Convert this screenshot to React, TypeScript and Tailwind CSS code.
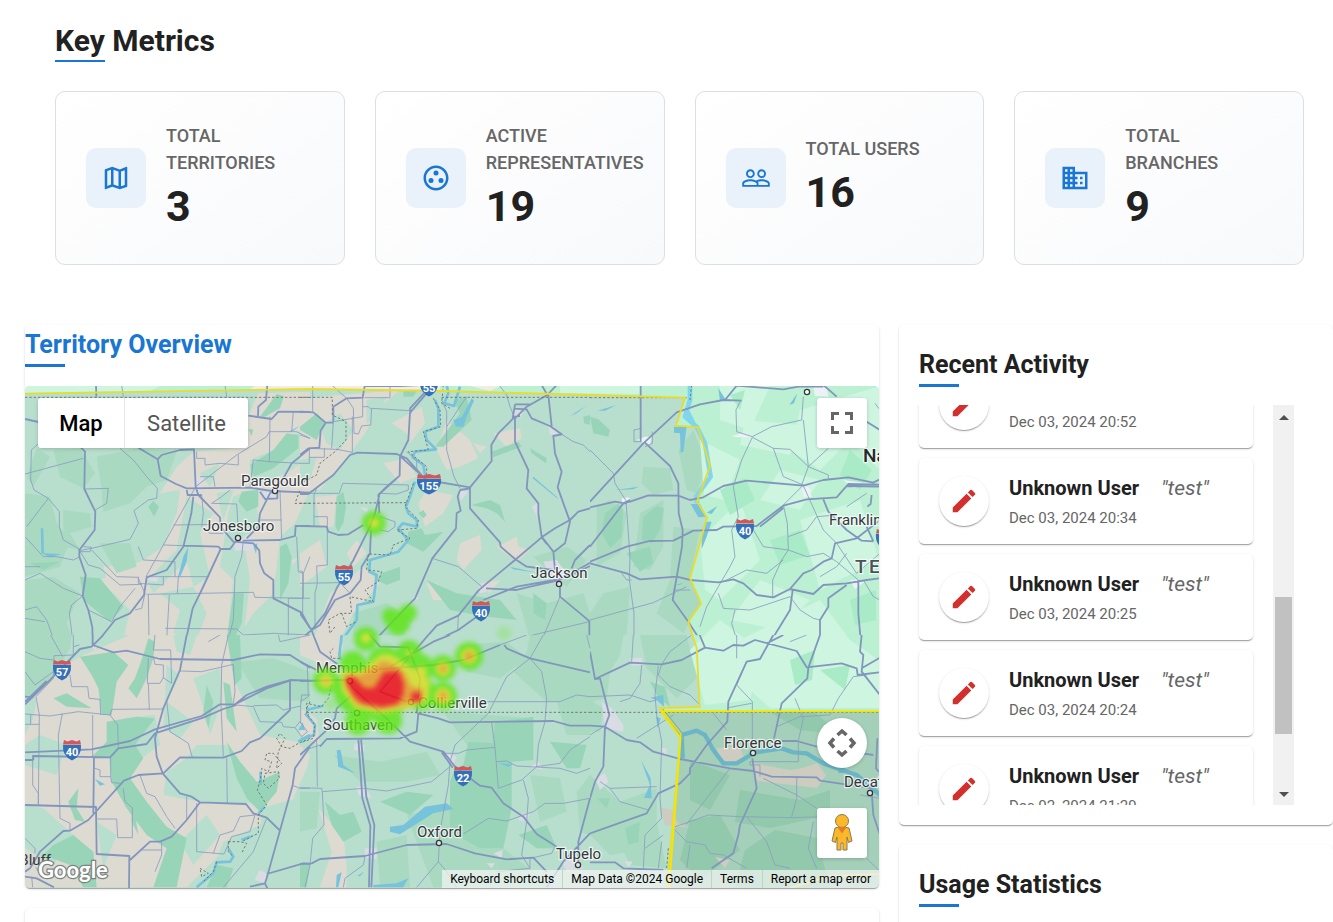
import { useLayoutEffect, useRef } from "react";
import type { ReactNode } from "react";
import { MdBusiness, MdEdit, MdOutlineGroupWork, MdOutlineMap, MdPeopleOutline } from "react-icons/md";

type Tile = {
  x: number;
  y: number;
  sand: string;
  pale: string;
  mid: string;
  deep: string;
  water: string;
  river: string;
  major: string;
  minor: string;
  dashed: string;
  town: string;
};

/* Map sheets: each is drawn on its own grid at three units to the pixel. */
const tiles: Tile[] = [
  {
    x: 20,
    y: 380,
    sand: "M690,95 L715,40 L870,35 L870,330 L820,440 L830,540 L760,640 L700,700 L650,780 L310,780 L330,690 L240,600 L370,540 L430,500 L470,400 L480,330 L420,340 L470,260 L520,215 L640,205Z M250,560 L310,555 L330,600 L260,600Z",
    pale: "M640,350 L700,325 L720,440 L670,470 L690,600 L670,780 L620,780 L640,600 L600,560 L625,400Z M780,470 L870,390 L870,520 L815,540 L840,640 L780,740 L700,780 L710,700 L760,640 L770,560Z M690,240 L760,210 L840,150 L870,130 L870,230 L800,280 L720,310 L690,300Z M590,340 L640,330 L610,420Z M540,280 L600,250 L570,320Z M420,640 L520,620 L560,700 L530,780 L460,760 L480,690Z M500,350 L580,400 L540,460 L570,590 L520,620 L500,540 L440,600 L400,640 L380,600 L470,510Z",
    mid: "M100,210 L180,205 L225,280 L190,325 L120,290Z M230,230 L350,205 L470,215 L440,300 L380,320 L330,370 L250,395 L245,330Z M15,340 L90,350 L110,430 L150,480 L120,560 L15,590Z M130,390 L210,400 L215,440 L150,460 L180,510 L130,500Z M15,600 L100,590 L180,640 L140,730 L160,780 L15,780Z M240,490 L330,490 L350,560 L290,580Z M50,205 L90,230 L40,320 L20,290Z",
    deep: "M180,590 L240,595 L310,680 L270,725 L190,660Z M690,255 L760,210 L800,160 L835,165 L835,205 L760,265 L700,290Z M665,335 L715,330 L715,380 L680,395 L655,365Z M385,380 L400,362 L417,380 L402,410Z M720,110 L770,42 L792,48 L780,85 L735,110Z M640,640 L672,640 L665,730 L640,780 L620,780Z M780,500 L800,490 L815,530 L805,610 L780,660Z M685,148 L700,148 L695,168Z M30,550 L120,545 L70,570Z",
    water: "M505,500 L500,545 L480,592 L474,590 L490,530Z M62,445 L70,445 L72,520 L125,522 L90,532 L64,520Z M805,155 L840,138 L820,152Z M700,498 L712,490 L708,522Z",
    river: "",
    major:
      "M180,200 L195,215 L193,327 L226,395 L224,450 L178,510 L178,530 L197,585 L188,648 L205,690 L217,742 L218,780 M355,203 L413,238 L422,288 L468,312 L500,325 L690,323 L755,333 L870,338 M413,238 L425,225 L480,210 L522,208 L527,320 M527,320 L535,345 L600,412 L602,440 L640,485 L700,490 L718,512 L720,550 L733,580 L760,600 L760,655 L845,698 L870,745 M520,350 L514,400 L490,500 L440,570 L380,592 L372,645 L330,700 L285,720 L237,780 M490,497 L595,500 L602,507 L545,630 L518,685 L498,780 M602,507 L630,507 L645,487 M500,330 L503,345 L545,345 M870,205 L815,250 L790,295 L750,340 L720,400 L715,440 L680,475 M670,482 L780,480 L825,468 L827,438 L870,438 M685,107 L755,117 L775,95 L870,96 M742,15 L738,60 L715,80 L714,108 M15,117 L55,126 M720,335 L735,357 L772,355 L772,338 M228,15 L229,50",
    minor:
      "M15,282 L190,235 M70,178 L34,210 L32,300 L42,330 L85,355 L118,395 L118,440 L130,480 L175,505 M195,327 L265,325 L260,370 L226,390 M300,205 L340,240 L380,290 L412,325 L410,355 L385,360 L342,392 L355,430 L330,478 L215,505 L178,512 M85,355 L20,440 M175,505 L205,555 L240,565 L300,615 L365,613 M215,510 L290,590 L355,592 M178,515 L210,515 L215,502 L190,500 M15,470 L70,530 L110,530 L160,540 L180,530 M15,600 L60,580 L130,625 L188,648 L155,675 L148,700 L158,780 M15,690 L50,680 L80,720 L102,780 M15,715 L75,725 M205,690 L275,725 L300,680 L345,625 M355,595 L375,640 L365,685 L345,690 M527,320 L430,495 L378,590 M527,320 L650,225 L740,170 L748,155 M460,435 L600,433 M430,495 L490,497 M380,643 L700,637 L705,652 L870,655 M385,645 L387,780 M448,645 L440,780 M435,745 L650,747 L670,765 L760,760 L870,765 M670,480 L665,530 L645,590 L640,720 L625,780 M780,330 L785,478 M750,110 L748,245 L700,240 L690,320 M748,155 L830,155 L870,175 M530,215 L530,235 L555,235 L555,255 L600,250 L655,255 L655,225 M748,245 L840,250 M545,345 L550,400 L545,440 L570,460 L610,460 M575,370 L605,350 L630,330 M575,370 L650,372 L655,455 M383,590 L430,590 L430,615 L355,610 L355,590 M430,590 L565,590 M465,545 L465,590 M370,540 L465,545 M355,500 L370,540 M805,655 L805,780 M805,655 L850,655 L850,580 L835,575 L830,470 M475,590 L472,640 M540,290 L580,290 L585,320 M820,95 L815,155 M15,560 L60,560 M720,420 L785,420 M870,530 L850,580 M305,15 L310,50 M615,15 L620,50",
    dashed: "M15,52 L870,52 M870,370 L825,370 L840,330",
    town: "M525,290 L550,290 L540,345 L515,320Z M640,480 L710,470 L700,510 L645,512Z M385,585 L418,590 L410,605 L385,602Z M730,335 L775,335 L770,355 L735,355Z",
  },
  {
    x: 300,
    y: 380,
    sand: "M0,60 L60,50 L300,30 L240,80 L195,160 L150,220 L60,330 L0,330Z M275,130 L365,80 L375,130 L330,190 L320,160Z M410,210 L440,120 L510,180 L535,235 L480,260 L440,270Z M355,370 L380,330 L460,345 L430,400 L375,440Z M480,490 L540,465 L545,510 L490,570 L470,540Z M590,500 L650,470 L655,500 L690,510 L650,545Z M580,160 L660,145 L665,175 L620,200Z M0,520 L60,480 L80,560 L0,620Z M140,520 L170,480 L200,520 L160,560Z M90,640 L190,560 L240,610 L160,700 L120,780 L40,780Z M380,610 L410,610 L465,660 L400,660Z M520,190 L560,200 L540,220Z M250,250 L320,235 L350,290 L300,310Z M45,350 L110,345 L100,440 L60,440Z M540,610 L600,600 L570,640Z",
    pale: "M60,140 L120,100 L160,150 L120,210 L80,190Z M200,60 L260,50 L230,120 L200,130Z M0,240 L50,230 L30,300 L0,290Z",
    mid: "M650,640 L740,670 L850,640 L870,700 L870,780 L690,780Z M160,700 L260,670 L340,720 L300,780 L160,780Z M700,530 L800,500 L860,540 L800,620Z",
    deep: "M0,140 L50,100 L75,125 L50,180 L0,150Z M110,350 L130,335 L138,380 L130,430 L115,455 L106,440Z M325,455 L365,445 L375,465 L430,455 L370,515 L320,490Z M245,580 L300,560 L300,600 L260,615 L230,600Z M575,215 L655,185 L665,200 L580,232Z M690,205 L740,235 L738,250 L695,220Z M515,375 L570,360 L600,375 L615,425 L590,400 L560,385Z M380,600 L470,640 L600,660 L650,720 L560,710 L450,690Z M405,200 L480,100 L460,60 L500,50 L515,120 L430,200Z M310,20 L360,15 L340,50 L310,50Z M355,400 L370,390 L380,405 L370,415Z M850,110 L870,105 L870,135 L852,130Z M700,640 L740,670 L735,720 L700,700Z",
    water: "M515,55 L522,62 L500,110 L490,140 L468,140 L460,120 L485,112Z M810,108 L858,78 L830,100Z M700,290 L770,350 L775,358 L698,295Z M630,560 L710,578 L640,568Z",
    river:
      "M440,15 L445,40 L433,70 L462,78 L480,20 M405,60 L415,85 L415,140 L375,155 L380,180 L408,208 L345,215 L338,232 L370,255 L375,285 M345,305 L330,350 L318,380 L325,400 L350,420 L352,440 L308,430 L295,445 L325,480 L295,515 L210,540 L208,575 L230,585 L220,665 L172,675 L170,720 L130,775",
    major:
      "M0,95 L40,97 L77,128 L100,128 M77,128 L62,152 L58,203 L25,205 L0,225 M100,125 L100,80 L140,55 L188,53 L194,18 L300,18 L365,15 M380,40 L330,98 L325,180 L300,230 L299,287 L235,345 L238,400 M372,40 L330,85 L332,100 M0,342 L25,342 L100,285 L150,225 L172,218 L290,222 L320,235 L365,285 M302,230 L380,300 L510,322 L575,243 L574,195 L595,160 L645,110 L660,108 M510,322 L510,385 L600,487 L602,500 L645,537 L680,560 L760,570 M725,15 L742,45 L680,80 L645,115 L645,185 L685,270 L680,325 L715,370 L715,400 L725,470 L760,515 L765,570 M770,15 L742,45 M645,73 L695,73 M645,86 L680,88 L695,115 L750,138 L785,163 L760,168 L765,220 L785,275 L773,322 L810,425 L795,490 L762,515 M645,73 L638,115 M745,45 L755,138 M725,472 L740,492 M870,385 L835,395 L810,420 L765,445 L725,472 L645,540 L560,610 L535,632 L475,707 L410,737 L372,780 M870,548 L780,600 L690,620 L650,630 L558,625 M870,558 L790,595 L650,620 L550,660 M545,700 L475,750 L410,780 M870,495 L825,540 L815,565 M480,330 L473,350 L482,392 L470,400 L468,445 L397,535 L345,655 L230,775 M510,325 L480,330 M238,345 L225,400 L210,440 L160,540 L110,625 L75,700 L35,750 L0,780 M213,450 L210,520 L185,560 L182,600 L150,640 L105,660 L60,735 L35,750 L0,700 M0,438 L80,440 L85,455 L115,465 L145,463 L190,435 M35,750 L45,780 M780,620 L780,650 L870,725 M868,725 V780 M235,345 L260,320 L299,287",
    minor:
      "M38,15 L38,95 M95,15 L140,55 L160,85 L162,160 L175,162 L185,138 L212,135 L215,85 L330,92 M188,53 L188,110 L100,125 L95,205 M194,53 L270,53 L270,18 M28,205 L28,250 L0,250 M28,232 L73,232 L73,205 M28,205 L110,208 L157,217 L157,110 M500,50 L440,140 L440,210 L462,290 L480,325 M425,60 L440,95 L440,140 M597,15 L620,45 L630,80 L642,108 M785,163 L820,185 L850,195 L870,215 M0,340 L118,340 L128,310 L325,315 L325,330 L290,342 L240,340 M397,535 L475,560 L545,620 M475,707 L473,750 M780,650 L730,770 M868,725 L700,765 L660,780 M42,345 L42,438 M82,440 L82,555 L50,558 L52,610 L45,640 L45,740 M0,572 L8,575 L8,700 M0,610 L120,608 L150,640 M240,410 L285,425 L285,440 L265,455 L240,450 M320,215 L350,240 L350,275 M0,165 L30,175 M42,410 L82,410 L82,440 M215,90 L205,80 L188,80 M50,325 L42,345",
    dashed:
      "M0,52 L97,52 L97,105 L138,125 L138,180 L105,215 L60,250 L50,285 L0,310 M0,370 L325,368 M425,52 L870,52 M430,15 L425,70 L450,85 M400,55 L420,90 L422,140 L370,155 L385,210 L325,215 L380,260 L380,285 M340,310 L315,380 L355,420 L350,445 L290,450 L330,475 L280,495 L270,525 L205,522 L200,570 L245,575 L235,605 L195,630 L220,665 L150,650 L155,700 L120,700 L85,720 L90,760 L105,740 M125,700 L140,740 L170,725",
    town: "M730,545 L770,540 L800,580 L775,625 L755,600Z M645,85 L670,95 L660,115 L640,110Z M745,130 L775,160 L750,165Z M475,330 L505,335 L482,362Z M715,368 L712,410 L695,380Z M535,620 L560,610 L560,635 L540,640Z M348,640 L355,658 L335,660Z M180,380 L205,385 L200,400Z",
  },
  {
    x: 590,
    y: 380,
    sand: "",
    pale: "M20,80 L90,70 L140,110 L120,180 L40,160Z M190,350 L260,350 L255,430 L210,440Z",
    mid: "M160,260 L240,265 L250,330 L190,345 L155,310Z M250,440 L330,450 L300,590 L330,670 L280,760 L200,700 L240,600Z M20,380 L60,360 L110,400 L90,520 L20,560Z M150,400 L220,360 L220,500 L180,570 L130,560Z M265,210 L310,150 L350,250 L320,340 L290,330Z M40,640 L120,620 L110,760 L100,780 L0,780 L0,700Z",
    deep: "M0,110 L25,118 L60,150 L55,170 L10,160Z M45,400 L85,370 L100,390 L95,470 L60,505 L35,460Z M160,410 L200,378 L222,385 L210,450 L185,490 L155,480Z M110,520 L180,500 L190,550 L150,575Z",
    water: "M22,92 L80,75 L45,92Z M75,330 L146,320 L130,328Z M252,140 L290,140 L280,215 L272,218 L270,160 L252,158Z M385,25 L408,60 L390,62Z M598,75 L622,40 L612,70Z M302,372 L330,372 L350,410 L325,412Z M350,398 L382,378 L365,402Z M256,615 L280,608 L270,615Z M345,425 L365,425 L350,470 L335,508 L335,470Z",
    river: "M300,15 L300,60 L285,110 L320,140 L345,190 L355,250 L362,290 L340,320 L318,350 L322,370 M290,90 L310,130",
    major:
      "M152,15 L152,185 M0,365 L160,190 L260,97 L330,73 L400,60 L455,62 M405,60 L440,17 L580,28 L625,20 L700,20 M165,188 L240,258 L265,310 L266,400 L278,450 L276,500 L248,660 L295,725 L330,780 M0,382 L75,365 L105,370 L175,346 L265,347 L300,360 L340,352 L400,318 L470,302 L640,317 L700,300 L775,292 L850,308 L870,298 M0,500 L100,370 L120,360 M0,545 L110,500 L180,483 L250,482 L310,452 L380,450 L400,440 L500,438 L580,377 L650,358 L740,352 L770,318 L870,320 M510,440 L580,384 M745,346 L775,312 L870,314 M0,550 L110,580 L150,598 L260,590 L300,600 L385,607 L430,598 L460,610 L500,645 L550,652 L600,627 L640,580 L665,570 L700,545 L725,535 L735,490 L800,475 L870,420 M600,627 L670,642 L700,615 L770,610 L830,600 L870,595 M608,630 L600,690 L545,780 M700,358 L715,395 L770,450 L815,482 L850,484 M770,615 L715,655 L715,680 L690,720 L690,780 M805,600 L805,700 L812,780 M830,125 L870,150 M700,15 L740,50 M845,345 L842,372 L832,380 M830,440 L850,484",
    minor:
      "M0,210 L70,280 L75,310 L108,362 L120,530 L118,600 L132,700 L132,780 M152,185 L132,185 L132,150 L155,145 M165,200 L187,190 L187,155 M0,720 L190,668 L290,620 M95,580 L110,600 L125,600 M250,630 L300,630 M640,50 L635,120 L545,140 L487,170 L440,155 L438,90 L450,65 M487,172 L455,240 L430,320 L445,410 L425,450 L435,530 L420,560 L385,620 L350,680 L330,740 M487,172 L550,205 L580,290 L640,315 L580,375 L592,430 L595,510 L575,540 L548,600 L548,650 M640,120 L655,260 L635,315 M550,205 L600,208 L655,260 L715,205 M655,260 L715,285 L715,300 M640,317 L700,450 L740,490 M490,450 L520,500 L595,510 L650,530 L700,520 L740,545 L805,600 M385,640 L400,685 L480,690 L600,650 L630,690 L670,715 L690,720 M400,605 L470,570 L530,580 L580,540 M595,470 L650,450 L680,410 L740,405 M740,490 L800,580 L870,520 M855,70 L870,90 M750,85 L800,60 M690,590 L740,560 L770,520 M435,690 L425,730 L440,780 M830,340 L770,380 M820,600 L850,650 L870,660",
    dashed: "M0,53 L290,53 M305,15 L300,60",
    town: "M635,310 L660,325 L665,352 L640,350Z M670,20 L710,18 L715,50 L675,48Z M140,180 L165,170 L185,170 L180,195Z M425,168 L460,158 L490,172 L440,172Z M95,355 L118,352 L118,372 L97,372Z M780,600 L830,600 L795,628Z M760,300 L830,310 L790,325Z",
  },
  {
    x: 20,
    y: 635,
    sand: "M60,130 L190,60 L330,0 L620,0 L640,130 L720,300 L830,320 L870,360 L860,400 L790,560 L740,600 L640,620 L500,757 L15,757 L15,300 L40,250Z",
    pale: "M15,330 L60,300 L140,330 L110,420 L15,390Z M530,330 L620,330 L660,420 L700,505 L540,500 L430,480 L440,410 L500,370Z M520,130 L600,100 L605,200 L570,300 L545,200Z M15,510 L70,520 L160,600 L100,690 L15,640Z M440,90 L480,120 L440,200 L520,260 L480,310 L430,280Z M310,250 L405,240 L420,330 L350,380Z M610,620 L740,560 L700,720 L640,757 L560,757Z M230,560 L290,600 L250,700Z M720,520 L870,480 L870,757 L740,757Z M260,320 L330,340 L300,430 L270,400Z M480,620 L560,540 L600,600 L520,690Z M460,0 L530,0 L510,60 L470,50Z",
    mid: "M15,0 L155,0 L150,40 L90,140 L15,190Z M650,80 L760,70 L870,110 L870,200 L720,190Z",
    deep: "M180,65 L280,50 L325,90 L290,140 L275,240 L245,240 L235,160 L215,120Z M385,10 L405,20 L400,70 L380,130 L350,190 L325,160 L345,130 L370,60Z M215,365 L260,320 L260,260 L350,245 L405,250 L345,330 L370,370 L330,430 L380,500 L440,575 L500,610 L470,757 L400,757 L440,640 L380,600 L320,520 L275,440 L270,370Z M100,190 L140,175 L215,220 L140,215Z M620,320 L660,380 L710,440 L780,410 L770,470 L720,530 L680,490 L650,430Z M100,630 L160,600 L220,650 L230,757 L190,757 L150,690 L70,660Z M145,500 L175,460 L170,520 L195,560 L165,555Z M610,140 L630,150 L650,290 L620,250Z M620,0 L660,0 L665,130 L645,150Z M560,150 L580,200 L565,280 L550,230Z M560,757 L590,690 L640,700 L620,757Z M335,480 L355,600 L335,560Z",
    water: "M225,432 L255,448 L240,452Z M835,285 L848,262 L855,285Z M45,695 L70,710 L52,708Z M660,612 L705,598 L680,615Z",
    river: "M870,300 L835,320 M722,410 L722,450 M715,535 L735,515 M690,605 L665,615 M625,640 L640,665 L630,680 L590,682 L580,715 L530,757",
    major:
      "M15,208 L90,135 L180,42 L215,35 L250,0 M15,200 L80,138 M218,0 L218,30 L280,52 L320,47 L420,72 L640,75 L720,58 L810,60 L870,98 M500,0 L480,105 L430,220 L405,310 L410,365 L428,415 M15,352 L215,343 L330,318 L405,283 L545,243 L600,208 L645,208 L680,180 L740,155 L810,135 L870,137 M650,205 L740,160 L810,137 M40,375 L40,363 L270,367 L295,340 L380,327 L405,295 L550,248 L610,222 L650,210 M15,375 L40,375 M810,137 L810,225 L720,310 L690,322 L665,348 L610,368 L480,367 L430,415 L355,420 L312,437 L205,555 L150,587 L130,588 L60,650 L30,700 L15,710 M222,365 L220,535 M15,510 L228,516 L230,657 L328,663 L327,760 M428,415 L480,475 L515,485 L540,502 L678,507 L700,535 L740,548 L778,585 M540,502 L500,555 L455,605 L420,620 L390,620 L330,675 M870,335 L825,400 L818,450 L740,730 L735,745 L690,755 M740,717 L850,685 L870,687 M735,745 L742,760 M15,725 L50,730 L102,757 M15,185 L40,187",
    minor:
      "M48,185 L58,240 L55,510 M15,237 L90,243 L175,230 L270,240 L275,223 L430,222 M270,240 L293,270 L295,340 M32,237 V268 M15,268 H58 M127,235 L115,300 L120,550 L150,565 L150,585 M38,360 L38,450 L55,475 L55,508 M385,70 L382,145 L420,145 L430,128 L455,145 L452,45 L400,45 L405,0 M400,65 L405,88 L430,90 L430,130 M385,145 L388,225 M440,195 L450,290 L505,325 L517,367 M625,0 L605,90 L603,210 L610,365 M480,108 L545,110 L640,88 L645,170 L640,205 M650,210 L700,215 L720,260 L785,262 L790,275 L825,278 M700,212 L770,210 L790,225 L842,213 L845,180 L870,180 M225,400 L240,405 L240,425 L272,425 L275,443 L305,445 M272,368 L272,425 M310,460 L315,500 L337,518 L337,608 L293,608 L290,552 L232,552 M360,420 L380,475 L405,485 L440,545 L465,580 M620,368 L622,505 M500,485 L500,555 M530,505 L530,650 L612,657 L635,605 L690,590 L705,540 L660,545 L640,588 L600,600 L580,655 M740,550 L700,650 L610,757 M425,620 L425,660 L405,710 M365,645 L425,645 M92,0 L128,65 M15,50 L60,70 L100,75 M48,185 L100,130 L102,62 L160,60 L160,35 L178,30 M160,0 V35 M150,120 L155,155 L203,155 L207,190 L240,193 L242,240 M218,240 L218,365 M15,110 L45,150 L100,110 M825,278 L840,260 L862,290 L845,305Z M820,452 L840,460 L870,460 M15,610 L45,640 L45,655 M870,0 L780,20 L775,0 M35,725 L38,757 M600,0 L565,20 M842,213 V265",
    dashed:
      "M870,310 L835,325 L810,340 L785,335 L770,310 L780,295 L795,310 L775,350 L770,400 L785,385 L760,355 L740,355 L735,375 L755,380 L745,410 L725,400 L722,430 L712,465 L740,510 L715,540 L715,595 L665,620 M735,415 L775,410 L778,430 L745,460 L730,445Z M625,620 L660,620 L680,625 L665,655 M625,620 L625,650 L640,665 M590,680 L580,710 L550,740 M540,700 L565,715 L545,725Z M870,200 L860,220 L865,240",
    town: "M210,35 L235,33 L225,45Z M718,705 L740,715 L735,745 L705,735Z M35,178 L55,180 L50,195Z",
  },
  {
    x: 300,
    y: 635,
    sand: "M0,220 L50,250 L60,330 L0,300Z M55,520 L90,560 L130,600 L140,690 L140,757 L60,757 L95,650Z M0,0 L120,0 L130,40 L90,100 L0,60Z",
    pale: "",
    mid: "M690,0 L870,0 L870,200 L740,200 L640,110 L680,50Z M320,540 L500,500 L610,640 L760,757 L400,757Z M430,230 L570,240 L690,250 L640,330 L500,330Z M690,420 L780,430 L800,530 L720,560Z M480,30 L620,20 L680,70 L600,130 L500,110Z M100,360 L240,380 L380,350 L420,420 L320,440 L180,440Z M230,620 L320,600 L330,757 L240,757Z M770,200 L870,190 L870,300 L800,300Z M0,470 L60,470 L50,580 L0,590Z M870,420 L830,470 L840,590 L870,600Z",
    deep: "M505,320 L580,325 L585,260 L700,245 L700,375 L635,380 L635,520 L610,640 L540,640 L450,590 L450,440 L465,400 L490,390Z M75,500 L120,540 L160,530 L185,590 L130,620 L95,570Z M240,500 L320,470 L400,480 L330,540Z M655,600 L740,570 L770,640 L710,640Z M750,320 L860,330 L840,400 L800,400Z M0,690 L30,690 L20,757 L0,757Z",
    water: "M270,575 L310,570 L375,515 L440,505 L460,522 L400,535 L300,598 L270,590Z M110,345 L122,345 L130,390 L165,415 L115,395Z M220,750 L290,745 L325,730 L310,757 L220,757Z M110,720 L125,712 L115,757 L108,757Z M595,385 L640,388 L625,395Z M172,722 L192,710 L180,724Z",
    river: "M125,0 L118,60 L122,75 M20,225 L70,212 M15,235 L45,270 L42,300 L0,315",
    major:
      "M175,310 L187,490 L211,572 L207,757 M183,310 L199,485 L223,570 L214,757 M0,360 L75,290 L105,250 L110,220 L150,185 M60,335 L80,312 L300,310 L350,290 L355,235 L415,250 L450,262 L760,258 L810,272 L870,272 M160,160 L270,260 L330,320 L430,350 L465,395 L540,452 L575,458 L610,505 L670,545 L710,597 L770,635 M425,352 L458,398 M0,687 L35,685 L60,672 L195,663 L320,630 L440,627 L525,655 L620,673 L700,668 L740,710 M613,30 L620,40 L690,70 L870,112 M200,105 L400,90 L490,75 L600,30 M0,138 L140,135 L160,160 M40,0 L60,50 L130,100 M870,490 L835,620 L835,680 M870,595 L790,680 L740,757 M0,80 L50,105 M210,0 L240,35 L325,37 L360,130 L350,235 M385,0 L240,170 L320,200 M450,0 L400,20 L270,95",
    minor:
      "M690,70 L620,125 L565,235 L465,330 L450,380 L445,450 L420,590 L415,680 L350,757 M600,30 L680,0 M690,70 L725,110 L740,190 L735,260 L715,330 L710,395 M550,200 L780,200 L830,180 L870,185 M430,355 L475,355 L500,345 L585,337 M575,262 L585,337 L595,460 L665,435 L710,395 L780,385 L810,345 L870,305 M590,380 L620,378 L650,393 L780,400 L830,415 L870,400 M0,458 L65,460 L67,470 L190,460 L260,468 L395,440 L450,395 M67,470 L72,570 L38,610 L30,690 L15,757 M50,310 L52,455 M30,340 L60,330 M670,435 L685,490 L680,560 L665,660 L690,700 M490,597 L565,550 L620,558 L700,530 L735,505 L790,505 L870,490 M195,665 L190,690 L135,730 L130,757 M415,680 L440,710 L470,757 M730,0 L690,70 M22,95 L25,185 L0,200 M870,40 L860,0 M690,670 L690,700 L590,710 M765,635 L755,655 L700,668",
    dashed: "M20,232 L870,232 M100,40 L90,50 L95,70 L125,70 M95,150 L85,190 L65,215 L20,205 L20,235 L45,270 L40,310 L5,322",
    town: "M430,350 L470,365 L460,390 L440,380Z M165,325 L195,330 L190,350 L160,345Z M170,455 L195,455 L215,490 L175,480Z M195,640 L230,640 L230,672 L195,668Z M690,395 L715,380 L730,405Z M660,540 L690,535 L680,560 L655,555Z M580,655 L608,645 L605,670Z M785,680 L830,670 L850,700 L800,710Z M560,685 L585,685 L575,700Z",
  },
  {
    x: 590,
    y: 635,
    sand: "",
    pale: "",
    mid: "M0,0 L100,0 L90,60 L60,110 L50,190 L0,200Z M0,195 L40,220 L30,290 L0,290Z M150,0 L290,0 L320,130 L260,190 L170,100Z M0,420 L90,500 L200,460 L200,640 L60,660 L0,600Z M60,560 L200,560 L230,700 L120,690Z",
    deep: "M105,580 L150,560 L145,620 L115,630Z M180,140 L225,155 L240,215 L205,190Z M20,490 L60,490 L50,520Z",
    water: "M180,188 L220,180 L222,215 L200,195Z M198,245 L212,250 L203,280Z M153,375 L182,430 L185,490 L162,488 L180,450Z",
    river: "",
    major:
      "M0,50 L15,132 L30,130 L58,240 L45,275 L40,395 L15,440 L0,490 M15,132 L120,83 L215,88 L275,75 L345,38 L400,47 L430,30 L460,32 L495,15 L620,48 L650,97 L755,85 L800,100 L803,120 L870,112 M329,0 L345,38 M550,0 L510,72 L470,80 L415,200 L412,260 L350,330 L300,400 L300,415 L270,445 L205,475 L170,535 L85,565 L0,595 M0,272 L45,275 L110,315 L150,322 L190,350 L270,372 L420,400 L490,408 L545,425 L680,427 L690,437 L850,460 M690,0 L655,98 L652,130 L575,205 L552,310 M487,370 L500,460 L450,570 L445,600 L430,655 L365,700 M575,318 L620,318 L680,335 L850,360 M0,682 L75,682 L100,700 L220,705 M862,310 L858,400 L866,410 M815,0 L810,50 L820,60 L815,110 L870,180 M815,100 L870,68 M845,470 L850,540 L870,600 M530,25 L580,0",
    minor:
      "M130,0 L125,80 M0,185 L120,180 L180,200 L200,195 M155,90 L150,145 L120,190 L90,200 M0,300 L40,275 M205,92 L195,180 L200,240 L215,320 L210,490 L215,550 L165,600 L160,700 M215,88 L205,120 L240,155 L300,180 L330,210 M215,88 L240,50 L305,0 M30,440 L60,460 L200,455 M60,460 L90,500 L175,525 M440,0 L440,70 M470,80 L440,150 L487,200 L487,340 M370,235 L410,285 M415,218 L485,205 M480,380 L625,380 L625,318 L640,250 L615,190 M480,380 V390 H510 V425 M560,275 L630,245 L720,240 L745,190 L790,125 L830,120 M420,400 L290,567 M255,575 L300,560 L355,540 L450,545 L610,548 L700,545 M470,545 L530,620 L555,690 L600,700 M620,425 L620,490 L605,545 M520,430 L620,480 L680,520 M250,580 L290,620 L345,630 L360,655 L400,660 L470,700 M220,600 L165,640 M300,630 L290,700 M670,560 L655,640 L680,700 M215,620 L205,700 M650,0 L600,20 M810,480 L870,490 M140,310 L250,240 M830,670 L870,710",
    dashed: "M0,232 L870,232 M235,640 L230,700",
    town: "M35,200 L65,220 L100,270 L100,290 L45,280Z M120,70 L155,68 L160,90 L125,92Z M15,430 L45,415 L55,440 L30,465Z M210,340 L230,340 L230,365Z M105,678 L128,680 L115,698Z",
  },
];

const tennesseePale =
  "M880,386 V470 L850,440 L820,470 L790,450 L800,410Z M745,420 L800,425 L790,455 L740,445Z M700,540 L740,500 L760,560 L720,600 L705,590Z M800,520 L860,500 L879,560 L820,590Z M690,650 L720,620 L760,650 L750,700 L705,705Z M740,640 L820,600 L850,640 L879,660 V708 L770,708 L750,690Z M720,386 L770,386 L750,430 L720,420Z M700,440 L740,460 L725,500 L704,495Z M780,470 L820,480 L800,510 L760,500Z M760,580 L810,600 L780,630 L730,620Z";
const tennesseeDeep =
  "M720,490 L745,478 L755,500 L730,515Z M850,450 L872,470 L860,490 L840,475Z M770,540 L800,530 L810,555 L780,565Z M850,600 L876,590 L876,620 L855,625Z M790,660 L815,650 L812,680 L795,685Z M730,395 L745,390 L740,410Z M820,670 L850,665 L845,690Z";
const stateLine = "M25,393.700 L310,389 L445,391 L590,395 L685,397.600 L676,425.700 L698,427.300 L710,466 L697,501.700 L707,517.700 L690,578.300 L701,603.300 L688.300,621.700 L696.700,648.300 L699.700,707 L660.300,708 L680.700,733.700 L667,888";

function Shield({ x, y, n }: { x: number; y: number; n: string }) {
  const w = n.length > 2 ? 12 : 9;
  return (
    <g transform={`translate(${x} ${y})`}>
      <path d={`M${-w},-5 Q${-w - 1},6 0,10.500 Q${w + 1},6 ${w},-5Z`} fill="#3370b9" />
      <path d={`M${-w + 1},-10 L${-w / 2},-8.500 L0,-10 L${w / 2},-8.500 L${w - 1},-10 L${w},-5.500 H${-w}Z`} fill="#d0575c" />
      <text y="5.500" textAnchor="middle" fontSize="11" fontWeight="700" fill="#fff">
        {n}
      </text>
    </g>
  );
}

const places = [
  { name: "Paragould", x: 241, y: 486, dx: 275, dy: 491 },
  { name: "Jonesboro", x: 203, y: 531, dx: 238, dy: 538 },
  { name: "Jackson", x: 531, y: 578, dx: 559, dy: 584 },
  { name: "Memphis", x: 316, y: 673, dx: 350, dy: 681 },
  { name: "Collierville", x: 418, y: 708, dx: 411, dy: 702 },
  { name: "Southaven", x: 323, y: 730, dx: 357, dy: 713 },
  { name: "Florence", x: 724, y: 748, dx: 753, dy: 753 },
  { name: "Oxford", x: 417, y: 837, dx: 439, dy: 843 },
  { name: "Tupelo", x: 556, y: 859, dx: 578, dy: 865 },
  { name: "Franklin", x: 829, y: 525, dx: 0, dy: 0 },
  { name: "Decatur", x: 844, y: 787, dx: 870, dy: 793 },
];

const glow: [number, number, number][] = [
  [374, 523, 12], [398, 623, 12], [408, 613, 9], [390, 616, 8], [366, 639, 12], [409, 652, 12], [469, 656, 14],
  [443, 668, 13], [443, 696, 14], [326, 681, 13], [353, 664, 13], [385, 664, 18], [380, 690, 30], [356, 692, 22],
  [403, 680, 26], [420, 668, 14], [358, 722, 13], [388, 720, 14], [421, 694, 16],
];
const warm: [number, number, number][] = [
  [374, 523, 5], [366, 638, 5], [469, 656, 8], [443, 669, 7], [443, 696, 8], [326, 681, 7], [421, 672, 6], [409, 653, 3],
];

function TerritoryMap() {
  return (
    <svg
      className="absolute inset-0 h-full w-full"
      viewBox="25 386 854 502"
      preserveAspectRatio="xMidYMid slice"
      fontFamily="Roboto, sans-serif"
      role="img"
      aria-label="Territory heat map"
    >
      <defs>
        <filter id="soft" x="-20%" y="-20%" width="140%" height="140%">
          <feGaussianBlur stdDeviation="2.500" />
        </filter>
        <clipPath id="sheet-top">
          <rect x="0" y="0" width="876" height="766" />
        </clipPath>
      </defs>
      <rect x="25" y="386" width="854" height="502" fill="#b8decd" />
      {tiles.map((t, i) => (
        <g key={i} transform={`translate(${t.x} ${t.y}) scale(.33333)`} clipPath="url(#sheet-top)">
          <path d={t.sand} fill="#dddad2" />
          <path d={t.pale} fill="#b8decd" />
          <path d={t.mid} fill="#a9dac1" />
          <path d={t.deep} fill="#98d5b8" />
        </g>
      ))}
      <path
        d="M25,393.700 L310,389 L445,391 L590,395 L685,397.600 L676,425.700 L698,427.300 L710,466 L697,501.700 L707,517.700 L690,578.300 L701,603.300 L688.300,621.700 L696.700,648.300 L699.700,707 L660,708 L662,711 H879 V386 H25Z"
        fill="#bbf0d3"
      />
      <path d={tennesseePale} fill="#cdf5e0" />
      <path d={tennesseeDeep} fill="#a8ebc6" />
      <path d="M25,386 H160 L150,391 L25,393Z M560,386 H640 V394 L560,393Z" fill="#cdf5e0" />
      <path d="M255,386 H440 V390 L310,389 L250,389Z M470,386 H500 L490,391Z" fill="#efede4" />
      <path d="M661,711 L681,735 L667,888 H879 V711Z" fill="#a4cfb9" />
      <path
        d="M690,760 L730,775 L710,810 L690,800Z M740,790 L800,800 L830,790 V815 L770,828 L735,822Z M775,830 L817,838 L830,888 H735 L745,850Z M690,820 L720,815 L740,850 L700,880 L680,860Z M770,712 L815,712 L840,735 L800,730Z"
        fill="#92c9ac"
      />
      <path
        d="M717,748 L740,746 L744,758 L730,763 L718,757Z M753,763 L790,770 L803,768 L817,763 L826,775 L817,788 L757,781Z M660,807 L672,810 L678,823 L690,828 L665,825Z M715,857 L730,860 L725,868Z"
        fill="#cecbc0"
      />
      {tiles.map((t, i) => (
        <g key={i} transform={`translate(${t.x} ${t.y}) scale(.33333)`} clipPath="url(#sheet-top)" fill="none" strokeLinejoin="round">
          <path d={t.town} fill={i === 2 ? "#ecf1f3" : "#dadce3"} />
          <path d={t.water} fill="#77c3dc" />
          <path d={t.river} stroke={i === 2 ? "#82d6ec" : "#77c3dc"} strokeWidth={i === 2 ? 14 : 8} />
          {i === 5 && (
            <path
              d="M215,225 L275,300 L320,287 L345,300 L370,345 L400,385 L440,385 L495,352 L575,340 L610,352 L650,355 L700,385 L800,420 L870,480 M275,300 L278,370 M745,410 L765,400"
              stroke="#6bb5c6"
              strokeWidth="13"
            />
          )}
          <path d={t.minor} stroke="#8b9fc0" strokeWidth="2.600" />
          <path d={t.major} stroke="#8296bd" strokeWidth="5.400" />
          <path d={t.dashed} stroke="#69756f" strokeWidth="2.800" strokeDasharray="7 6" />
        </g>
      ))}
      <path d={stateLine} fill="none" stroke="#e9dc2c" strokeWidth="1.800" />
      <path d="M879,711.300 H661 L680.500,738 L669,888" fill="none" stroke="#f6e500" strokeWidth="2" />
      <path d="M790,888 L830,876 L879,874" fill="none" stroke="#f1e64f" strokeWidth="1.500" />

      {places.map((p) => (
        <g key={p.name}>
          {p.dx > 0 && <circle cx={p.dx} cy={p.dy} r="2.600" fill="#e3e6e6" stroke="#33373b" strokeWidth="1.300" />}
          <text x={p.x} y={p.y} fontSize="15" fill="#33373b" stroke="#ffffffb0" strokeWidth="2.500" paintOrder="stroke">
            {p.name}
          </text>
        </g>
      ))}
      <circle cx="807" cy="392" r="2.600" fill="#fff" stroke="#33373b" strokeWidth="1.300" />
      <text x="51" y="865" textAnchor="end" fontSize="15" fill="#33373b">
        Pine Bluff
      </text>
      <text x="863" y="462" fontSize="19" fontWeight="500" fill="#25282b" stroke="#ffffffb0" strokeWidth="2.500" paintOrder="stroke">
        Nashville
      </text>
      <text x="855 869" y="573" fontSize="19" fontWeight="500" fill="#4a5357" stroke="#ffffffb0" strokeWidth="2.500" paintOrder="stroke">
        TE
      </text>

      <Shield x={429} y={484} n="155" />
      <Shield x={344} y={575} n="55" />
      <Shield x={429} y={386} n="55" />
      <Shield x={481} y={611} n="40" />
      <Shield x={745} y={529} n="40" />
      <Shield x={62} y={670} n="57" />
      <Shield x={72} y={750} n="40" />
      <Shield x={463} y={776} n="22" />
      <Shield x={885} y={539} n="65" />

      <g opacity="0.800">
        <g filter="url(#soft)">
          <g fill="#5be60f">
            {glow.map(([x, y, r]) => (
              <circle key={`${x}-${y}`} cx={x} cy={y} r={r} />
            ))}
          </g>
          <g opacity="0.450" fill="#7fe54a">
            <circle cx="504" cy="633" r="7" />
            <circle cx="331" cy="704" r="7" />
          </g>
        </g>
        <g filter="url(#soft)" fill="#dce01c">
          {warm.map(([x, y, r]) => (
            <circle key={`${x}-${y}`} cx={x} cy={y} r={r} />
          ))}
          <path d="M341,672 L362,672 L374,660 L382,654 L392,655 L412,668 L430,680 L428,700 L410,708 L382,713 L355,708 L342,690Z" />
        </g>
        <g filter="url(#soft)" fill="#f0941f">
          <path d="M346,676 L358,676 L376,666 L382,661 L388,662 L404,672 L411,686 L424,690 L420,700 L400,706 L380,709 L356,704 L345,686Z" />
          <circle cx="469" cy="656" r="4" />
          <circle cx="443" cy="669" r="3.500" />
          <circle cx="443" cy="696" r="4" />
          <circle cx="326" cy="681" r="2" />
        </g>
        <g filter="url(#soft)" fill="#f5000c">
          <path d="M346,677 L354,677 L364,688 L374,688 L384,672 L399,671 L404,684 L403,696 L397,704 L382,707 L362,703 L354,696 L347,684Z" />
          <path d="M348,678 L354,677 L364,688 L376,690 L386,674 L398,673 L403,684 L402,696 L396,703 L382,706 L362,702 L354,696Z" />
          <circle cx="416" cy="697" r="5" />
        </g>
      </g>

      <text x="38" y="878" fontFamily="Lato, sans-serif" fontSize="22" fontWeight="700" fill="#fff" stroke="#7c8481" strokeWidth="2.500" paintOrder="stroke">
        Google
      </text>
    </svg>
  );
}

function Pegman() {
  return (
    <svg viewBox="0 0 24 40" className="h-10 w-6" aria-hidden="true">
      <g stroke="#8a7a55" strokeWidth="1" strokeLinejoin="round">
        <path d="M5,15 Q12,12 19,15 L22,28 L18.500,29.500 L17,24 V37 H13 V30 H11 V37 H7 V24 L5.500,29.500 L2,28Z" fill="#fbb829" />
        <circle cx="12" cy="8" r="6.500" fill="#fbb829" />
      </g>
      <path d="M7.500,14 H16.500 L12,20.500Z" fill="#e57a27" />
    </svg>
  );
}

function Title({ children, accent = false }: { children: ReactNode; accent?: boolean }) {
  return (
    <div className="pt-1">
      <h2 className={accent ? "text-[25px] leading-8 font-bold text-[#1976d2]" : "text-[25px] leading-8 font-bold text-[#212121]"}>
        {children}
      </h2>
      <div className="mt-[3px] h-[3px] w-10 bg-[#1976d2]" />
    </div>
  );
}

const metrics = [
  { label: "Total Territories", value: 3, Icon: MdOutlineMap },
  { label: "Active Representatives", value: 19, Icon: MdOutlineGroupWork },
  { label: "Total Users", value: 16, Icon: MdPeopleOutline },
  { label: "Total Branches", value: 9, Icon: MdBusiness },
];

const activity = ["Dec 03, 2024 20:52", "Dec 03, 2024 20:34", "Dec 03, 2024 20:25", "Dec 03, 2024 20:24", "Dec 02, 2024 21:29"];

const raised = "rounded-[5px] bg-white shadow-[0_2px_1px_-1px_rgba(0,0,0,0.2),0_1px_1px_0_rgba(0,0,0,0.14),0_1px_3px_0_rgba(0,0,0,0.12)]";

function RecentActivity() {
  const list = useRef<HTMLUListElement>(null);
  useLayoutEffect(() => {
    if (list.current) list.current.scrollTop = 43;
  }, []);
  const step = (by: number) => list.current?.scrollBy({ top: by });
  return (
    <section className={`${raised} py-5 pr-[39px] pl-5`}>
      <Title>Recent Activity</Title>
      <div className="mt-[18px] flex h-[400px]">
        <ul ref={list} className="-ml-1 flex flex-1 flex-col gap-[10px] overflow-y-scroll pr-5 pl-1 [scrollbar-width:none]">
          {activity.map((date) => (
            <li key={date} className={`${raised} flex h-[86px] shrink-0 items-center gap-5 px-5`}>
              <span className="flex size-[50px] shrink-0 items-center justify-center rounded-full bg-white text-[#d32f2f] shadow-[0_2px_1px_-1px_rgba(0,0,0,0.2),0_1px_1px_0_rgba(0,0,0,0.14),0_1px_3px_0_rgba(0,0,0,0.12)]">
                <MdEdit className="size-[30px]" />
              </span>
              <div className="pt-1">
                <p className="flex gap-[22px] leading-[30px]">
                  <span className="text-[20px] font-bold text-[#212121]">Unknown User</span>
                  <span className="text-[21px] text-[#666] italic">"test"</span>
                </p>
                <p className="text-[15px] leading-[30px] text-[#666]">{date}</p>
              </div>
            </li>
          ))}
        </ul>
        <div className="flex w-[21px] flex-col bg-[#f1f1f1]">
          <button type="button" aria-label="Scroll up" onClick={() => step(-96)} className="flex h-[21px] items-center justify-center">
            <svg viewBox="0 0 10 5" className="mt-1 h-[5px] w-[10px]" fill="#505050">
              <path d="M5,0 L10,5 H0Z" />
            </svg>
          </button>
          <div className="flex-1 px-[2px] pt-[171px]">
            <div className="h-[137px] bg-[#c1c1c1]" />
          </div>
          <button type="button" aria-label="Scroll down" onClick={() => step(96)} className="flex h-[21px] items-center justify-center">
            <svg viewBox="0 0 10 5" className="h-[5px] w-[10px]" fill="#505050">
              <path d="M0,0 H10 L5,5Z" />
            </svg>
          </button>
        </div>
      </div>
    </section>
  );
}

export default function App() {
  return (
    <main className="h-screen overflow-x-hidden overflow-y-auto bg-white font-[Roboto,sans-serif] text-[#212121] [scrollbar-width:none]">
      <section className="pt-[23px] pr-[29px] pl-[55px]">
        <h1 className="text-[30px] leading-9 font-bold">Key Metrics</h1>
        <div className="mt-px h-[2px] w-[50px] bg-[#1976d2]" />
        <div className="mt-[29px] grid grid-cols-4 gap-[30px]">
          {metrics.map(({ label, value, Icon }) => (
            <article
              key={label}
              className="flex min-h-[174px] items-center gap-5 rounded-[10px] border border-[#dcdfe0] bg-linear-[145deg,#ffffff,#f8f9fb] px-[30px]"
            >
              <span className="flex size-[60px] shrink-0 items-center justify-center rounded-[10px] bg-[#e9f1fa] text-[#1976d2]">
                <Icon className="size-[30px]" />
              </span>
              <div className="min-w-0">
                <h3 className="text-[18px] leading-[27px] font-medium text-[#666] uppercase">{label}</h3>
                <p className="pt-px text-[43px] leading-[58px] font-bold">{value}</p>
              </div>
            </article>
          ))}
        </div>
      </section>

      <div className="mt-[60px] grid grid-cols-[minmax(0,1fr)_434px] items-start gap-5 pl-[25px]">
        <div className="flex flex-col gap-5">
          <section className={raised}>
            <Title accent>Territory Overview</Title>
            <div className="relative mt-[19px] h-[502px] overflow-hidden rounded-[5px]">
              <TerritoryMap />
              <div className="absolute top-3 left-[13px] flex h-[50px] rounded-[3px] bg-white text-[22px] shadow-[0_1px_4px_-1px_rgba(0,0,0,0.3)]">
                <button type="button" className="w-[87px] border-r border-[#e8e8e8] font-medium text-black">
                  Map
                </button>
                <button type="button" className="w-[123px] text-[#565656]">
                  Satellite
                </button>
              </div>
              <button
                type="button"
                aria-label="Toggle fullscreen view"
                className="absolute top-3 right-3 flex size-[50px] items-center justify-center rounded-[3px] bg-white shadow-[0_1px_4px_-1px_rgba(0,0,0,0.3)]"
              >
                <svg viewBox="0 0 22 22" className="size-[22px]" fill="none" stroke="#666" strokeWidth="3">
                  <path d="M1.500,8 V1.500 H8 M14,1.500 H20.500 V8 M20.500,14 V20.500 H14 M8,20.500 H1.500 V14" />
                </svg>
              </button>
              <div className="absolute right-3 bottom-[30px] flex flex-col gap-10">
                <button
                  type="button"
                  aria-label="Map camera controls"
                  className="flex size-[50px] items-center justify-center rounded-full bg-white shadow-[0_1px_4px_-1px_rgba(0,0,0,0.3)]"
                >
                  <svg viewBox="0 0 30 30" className="size-[30px]" fill="none" stroke="#666" strokeWidth="3.500">
                    <path d="M10.500,7 L15,3 L19.500,7 M10.500,23 L15,27 L19.500,23 M7,10.500 L3,15 L7,19.500 M23,10.500 L27,15 L23,19.500" />
                  </svg>
                </button>
                <button
                  type="button"
                  aria-label="Street View"
                  className="flex size-[50px] items-center justify-center rounded-[3px] bg-white shadow-[0_1px_4px_-1px_rgba(0,0,0,0.3)]"
                >
                  <Pegman />
                </button>
              </div>
              <div className="absolute right-0 bottom-0 flex h-[18px] divide-x divide-[#b9d6c7] bg-[#f5f5f5]/70 text-[12px] leading-[18px] text-black">
                <button type="button" className="px-2">
                  Keyboard shortcuts
                </button>
                <span className="px-2">Map Data ©2024 Google</span>
                <a href="#terms" className="px-2">
                  Terms
                </a>
                <a href="#report" className="px-2">
                  Report a map error
                </a>
              </div>
            </div>
          </section>
          <section className={`${raised} h-40`} />
        </div>

        <div className="flex flex-col gap-5">
          <RecentActivity />
          <section className={`${raised} h-60 p-5`}>
            <Title>Usage Statistics</Title>
          </section>
        </div>
      </div>
    </main>
  );
}
